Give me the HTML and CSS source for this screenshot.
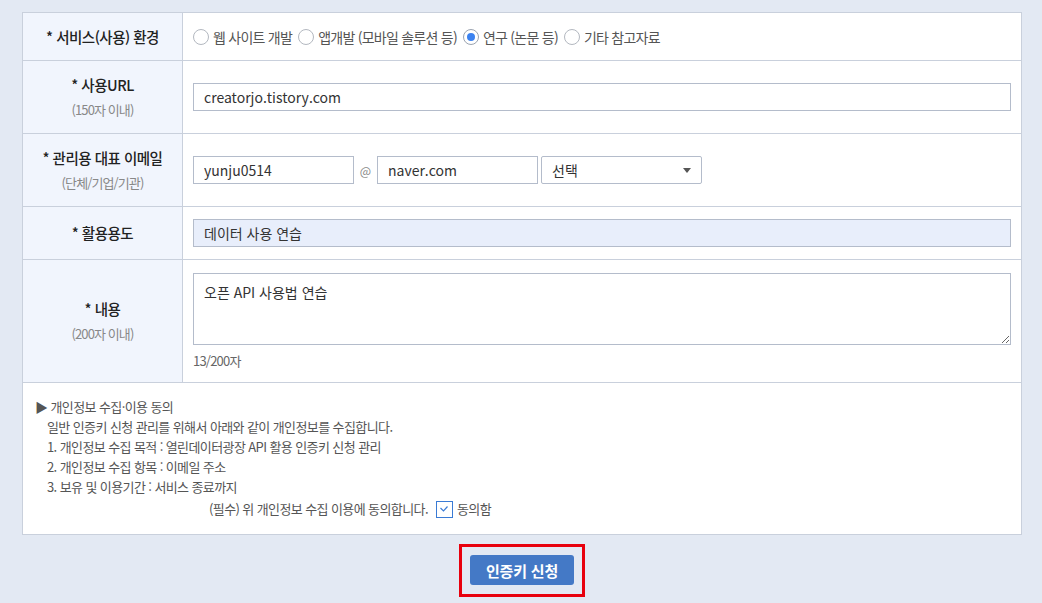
FILE: index.html
```html
<!DOCTYPE html>
<html lang="ko">
<head>
    <meta charset="UTF-8">
    <meta name="viewport" content="width=device-width, initial-scale=1.0">
    <title>인증키 신청</title>
    <link rel="stylesheet" href="styles.css">
</head>
<body>

<div class="wrap">
    <!-- 신청 폼 -->
    <table class="form-table">
        <tr class="row-env">
            <th>* 서비스(사용) 환경</th>
            <td>
                <div class="radios">
                    <label class="radio"><span class="dot"></span>웹 사이트 개발</label>
                    <label class="radio"><span class="dot"></span>앱개발 (모바일 솔루션 등)</label>
                    <label class="radio"><span class="dot on"></span>연구 (논문 등)</label>
                    <label class="radio"><span class="dot"></span>기타 참고자료</label>
                </div>
            </td>
        </tr>
        <tr class="row-tall">
            <th>* 사용URL<span class="sub">(150자 이내)</span></th>
            <td><input class="field full" type="text" value="creatorjo.tistory.com"></td>
        </tr>
        <tr class="row-tall">
            <th>* 관리용 대표 이메일<span class="sub">(단체/기업/기관)</span></th>
            <td>
                <div class="email">
                    <input class="field short" type="text" value="yunju0514">
                    <span class="at">@</span>
                    <input class="field short" type="text" value="naver.com">
                    <div class="select">선택<span class="arrow"></span></div>
                </div>
            </td>
        </tr>
        <tr class="row-use">
            <th>* 활용용도</th>
            <td><input class="field full filled" type="text" value="데이터 사용 연습"></td>
        </tr>
        <tr class="row-content">
            <th>* 내용<span class="sub">(200자 이내)</span></th>
            <td>
                <textarea class="area">오픈 API 사용법 연습</textarea>
                <div class="count">13/200자</div>
            </td>
        </tr>
        <tr>
            <td class="privacy" colspan="2">
                <p class="title">▶ 개인정보 수집·이용 동의</p>
                <p>일반 인증키 신청 관리를 위해서 아래와 같이 개인정보를 수집합니다.</p>
                <p>1. 개인정보 수집 목적 : 열린데이터광장 API 활용 인증키 신청 관리</p>
                <p>2. 개인정보 수집 항목 : 이메일 주소</p>
                <p>3. 보유 및 이용기간 : 서비스 종료까지</p>
                <p class="agree">
                    (필수) 위 개인정보 수집 이용에 동의합니다.
                    <span class="check">
                        <svg width="10" height="8" viewBox="0 0 10 8"><path d="M1.5 3 L4.5 6 L8.5 1.5" fill="none" stroke="#3a7bd5" stroke-width="1.2"/></svg>
                    </span>
                    동의함
                </p>
            </td>
        </tr>
    </table>

    <!-- 버튼 -->
    <div class="actions">
        <div class="highlight">
            <button class="btn" type="button">인증키 신청</button>
        </div>
    </div>
</div>

</body>
</html>
```

FILE: styles.css
```css
body {
    margin: 0;
    padding: 0;
    background: #e3e9f3;
    font-family: "Noto Sans CJK KR", "Noto Sans", sans-serif;
    color: #333;
    font-size: 14px;
}

.wrap {
    padding: 12px 20px 0 22px;
}

.form-table {
    width: 1000px;
    border-collapse: collapse;
    background: #fff;
    border: 1px solid #c9d0dc;
}

.form-table th,
.form-table td {
    border: 1px solid #c9d0dc;
    padding: 0;
}

.form-table th {
    width: 160px;
    background: #f1f5fd;
    color: #222;
    font-weight: 500;
    font-size: 14.5px;
    letter-spacing: -0.5px;
    text-align: center;
    line-height: 20px;
}

.form-table td {
    padding: 0 10px;
}

.sub {
    display: block;
    margin-top: 5px;
    font-size: 13px;
    font-weight: 400;
    color: #888;
    letter-spacing: -0.9px;
}

.row-env { height: 48px; }
.row-tall { height: 73px; }
.row-use { height: 53px; }
.row-content { height: 123px; }

.radios {
    display: flex;
    align-items: center;
    gap: 6px;
    font-size: 14px;
    color: #555;
    letter-spacing: -0.75px;
}

.radio {
    display: flex;
    align-items: center;
    gap: 4px;
}

.dot {
    width: 16px;
    height: 16px;
    border: 1px solid #b3b8c0;
    border-radius: 50%;
    box-sizing: border-box;
    background: #fff;
    position: relative;
}

.dot.on {
    border-color: #9aa3b0;
}

.dot.on::after {
    content: "";
    position: absolute;
    left: 3px;
    top: 3px;
    width: 8px;
    height: 8px;
    border-radius: 50%;
    background: #3b82f0;
}

.field {
    height: 28px;
    box-sizing: border-box;
    border: 1px solid #b4bccb;
    padding: 0 10px;
    font-family: inherit;
    font-size: 14px;
    color: #333;
    background: #fff;
    outline: none;
    margin: 0;
    display: block;
}

.field.full {
    width: 818px;
}

.field.filled {
    background: #e8eefb;
}

.email {
    display: flex;
    align-items: center;
}

.field.short {
    width: 161px;
}

.at {
    width: 23px;
    text-align: center;
    font-size: 12px;
    color: #888;
}

.select {
    width: 161px;
    height: 28px;
    box-sizing: border-box;
    margin-left: 3px;
    border: 1px solid #b4bccb;
    border-radius: 2px;
    padding: 0 10px;
    display: flex;
    align-items: center;
    justify-content: space-between;
    font-size: 14px;
    color: #333;
}

.arrow {
    width: 0;
    height: 0;
    border-left: 4px solid transparent;
    border-right: 4px solid transparent;
    border-top: 5px solid #555;
}

.area {
    display: block;
    width: 818px;
    height: 72px;
    box-sizing: border-box;
    border: 1px solid #b4bccb;
    padding: 8px 10px;
    font-family: inherit;
    font-size: 14px;
    color: #333;
    resize: vertical;
    outline: none;
    margin-top: 1px;
}

.count {
    margin-top: 6px;
    font-size: 13px;
    color: #666;
    letter-spacing: -0.8px;
}

.privacy {
    height: 137px;
    font-size: 13px;
    color: #555;
    letter-spacing: -0.6px;
    vertical-align: top;
}

.form-table td.privacy {
    padding: 14px 12px 0 12px;
}

.privacy p {
    margin: 0 0 0 12px;
    line-height: 20px;
}

.privacy p.title {
    margin-left: 0;
}

.privacy p.agree {
    margin: 2px 0 0 174px;
    display: flex;
    align-items: center;
    gap: 4px;
}

.check {
    width: 17px;
    height: 17px;
    box-sizing: border-box;
    border: 1px solid #3a7bd5;
    display: inline-flex;
    align-items: center;
    justify-content: center;
    margin-left: 4px;
}

.actions {
    display: flex;
    justify-content: center;
    padding-top: 9px;
    width: 1000px;
}

.highlight {
    border: 3px solid #e8000d;
    padding: 8px 8px 9px 8px;
}

.btn {
    width: 104px;
    height: 30px;
    background: #4479c6;
    color: #fff;
    border: none;
    border-radius: 3px;
    font-family: inherit;
    font-size: 15px;
    font-weight: 700;
    letter-spacing: -0.2px;
    display: block;
}
```
